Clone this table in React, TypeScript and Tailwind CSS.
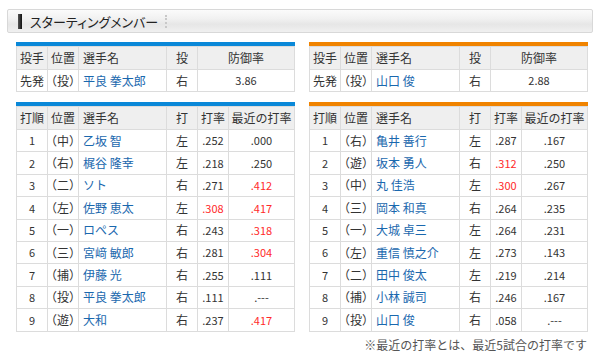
import React from "react";

type Bat = { o: string; p: string; n: string; h: string; a: string; ar?: boolean; r: string; rr?: boolean };

const left: Bat[] = [
  { o: "1", p: "中", n: "乙坂 智", h: "左", a: ".252", r: ".000" },
  { o: "2", p: "右", n: "梶谷 隆幸", h: "左", a: ".218", r: ".250" },
  { o: "3", p: "二", n: "ソト", h: "右", a: ".271", r: ".412", rr: true },
  { o: "4", p: "左", n: "佐野 恵太", h: "左", a: ".308", ar: true, r: ".417", rr: true },
  { o: "5", p: "一", n: "ロペス", h: "右", a: ".243", r: ".318", rr: true },
  { o: "6", p: "三", n: "宮﨑 敏郎", h: "右", a: ".281", r: ".304", rr: true },
  { o: "7", p: "捕", n: "伊藤 光", h: "右", a: ".255", r: ".111" },
  { o: "8", p: "投", n: "平良 拳太郎", h: "右", a: ".111", r: ".---" },
  { o: "9", p: "遊", n: "大和", h: "右", a: ".237", r: ".417", rr: true },
];

const right: Bat[] = [
  { o: "1", p: "右", n: "亀井 善行", h: "左", a: ".287", r: ".167" },
  { o: "2", p: "遊", n: "坂本 勇人", h: "右", a: ".312", ar: true, r: ".250" },
  { o: "3", p: "中", n: "丸 佳浩", h: "左", a: ".300", ar: true, r: ".267" },
  { o: "4", p: "三", n: "岡本 和真", h: "右", a: ".264", r: ".235" },
  { o: "5", p: "一", n: "大城 卓三", h: "左", a: ".264", r: ".231" },
  { o: "6", p: "左", n: "重信 慎之介", h: "左", a: ".273", r: ".143" },
  { o: "7", p: "二", n: "田中 俊太", h: "左", a: ".219", r: ".214" },
  { o: "8", p: "捕", n: "小林 誠司", h: "右", a: ".246", r: ".167" },
  { o: "9", p: "投", n: "山口 俊", h: "右", a: ".058", r: ".---" },
];

const cell = "border border-[#dcdcdc] text-center font-normal p-0";
const nameCell = "border border-[#dcdcdc] text-left font-normal p-0 pl-[4px] text-[#1a68ae] whitespace-nowrap";
const pos = "[font-feature-settings:'halt']";

function Cols() {
  return (
    <colgroup>
      <col className="w-[31px]" />
      <col className="w-[31px]" />
      <col className="w-[88px]" />
      <col className="w-[31px]" />
      <col className="w-[31px]" />
      <col />
    </colgroup>
  );
}

function PitcherTable({ bar, name, era }: { bar: string; name: string; era: string }) {
  return (
    <div>
      <div className={`h-[4px] ${bar}`} />
      <table className="w-full border-collapse table-fixed text-[12px] text-[#333]">
        <Cols />
        <tbody>
          <tr className="h-[23px] bg-[#efefef]">
            <th className={cell}>投手</th>
            <th className={cell}>位置</th>
            <th className="border border-[#dcdcdc] text-left font-normal p-0 pl-[4px]">選手名</th>
            <th className={cell}>投</th>
            <th className={cell} colSpan={2}>防御率</th>
          </tr>
          <tr className="h-[22px]">
            <td className={cell}>先発</td>
            <td className={`${cell} ${pos}`}>（投）</td>
            <td className={nameCell}>{name}</td>
            <td className={cell}>右</td>
            <td className={`${cell} text-[11px]`} colSpan={2}>{era}</td>
          </tr>
        </tbody>
      </table>
    </div>
  );
}

function BatTable({ bar, rows }: { bar: string; rows: Bat[] }) {
  return (
    <div>
      <div className={`h-[4px] ${bar}`} />
      <table className="w-full border-collapse table-fixed text-[12px] text-[#333]">
        <Cols />
        <tbody>
          <tr className="h-[23px] bg-[#efefef]">
            <th className={cell}>打順</th>
            <th className={cell}>位置</th>
            <th className="border border-[#dcdcdc] text-left font-normal p-0 pl-[4px]">選手名</th>
            <th className={cell}>打</th>
            <th className={cell}>打率</th>
            <th className={`${cell} whitespace-nowrap`}>最近の打率</th>
          </tr>
          {rows.map((r) => (
            <tr key={r.o} className="h-[22.4px]">
              <td className={`${cell} text-[11px]`}>{r.o}</td>
              <td className={`${cell} ${pos}`}>（{r.p}）</td>
              <td className={nameCell}>{r.n}</td>
              <td className={cell}>{r.h}</td>
              <td className={`${cell} text-[11px] ${r.ar ? "text-[#ff2a2a]" : ""}`}>{r.a}</td>
              <td className={`${cell} text-[11px] ${r.rr ? "text-[#ff2a2a]" : ""}`}>{r.r}</td>
            </tr>
          ))}
        </tbody>
      </table>
    </div>
  );
}

export default function App() {
  return (
    <div className="w-[600px] h-[355px] bg-white pt-[9px] px-[7px] font-['Noto_Sans_CJK_JP',sans-serif] overflow-hidden">
      <div className="h-[24px] border border-[#d8d8d8] rounded-[2px] bg-[linear-gradient(#fbfbfb,#f1f1f1_40%,#e6e6e6_65%,#f0f0f0)] flex items-center pl-[10px]">
        <div className="w-[4px] h-[15px] bg-[linear-gradient(90deg,#555,#111)]" />
        <span className="ml-[8px] text-[13px] leading-none text-[#222] [font-feature-settings:'palt']">スターティングメンバー</span>
        <div className="ml-[7px] h-[13px] border-l-2 border-dotted border-[#c8c8c8]" />
      </div>
      <div className="mt-[9px] pl-[9px] flex gap-[14px]">
        <div className="w-[279px] flex flex-col gap-[10px]">
          <PitcherTable bar="bg-[#0a88d8]" name="平良 拳太郎" era="3.86" />
          <BatTable bar="bg-[#0a88d8]" rows={left} />
        </div>
        <div className="w-[279px] flex flex-col gap-[10px]">
          <PitcherTable bar="bg-[#f08300]" name="山口 俊" era="2.88" />
          <div>
            <BatTable bar="bg-[#f08300]" rows={right} />
            <div className="mt-[5px] text-right text-[12px] leading-[16px] text-[#555] pr-[1px]">※最近の打率とは、最近5試合の打率です</div>
          </div>
        </div>
      </div>
    </div>
  );
}
